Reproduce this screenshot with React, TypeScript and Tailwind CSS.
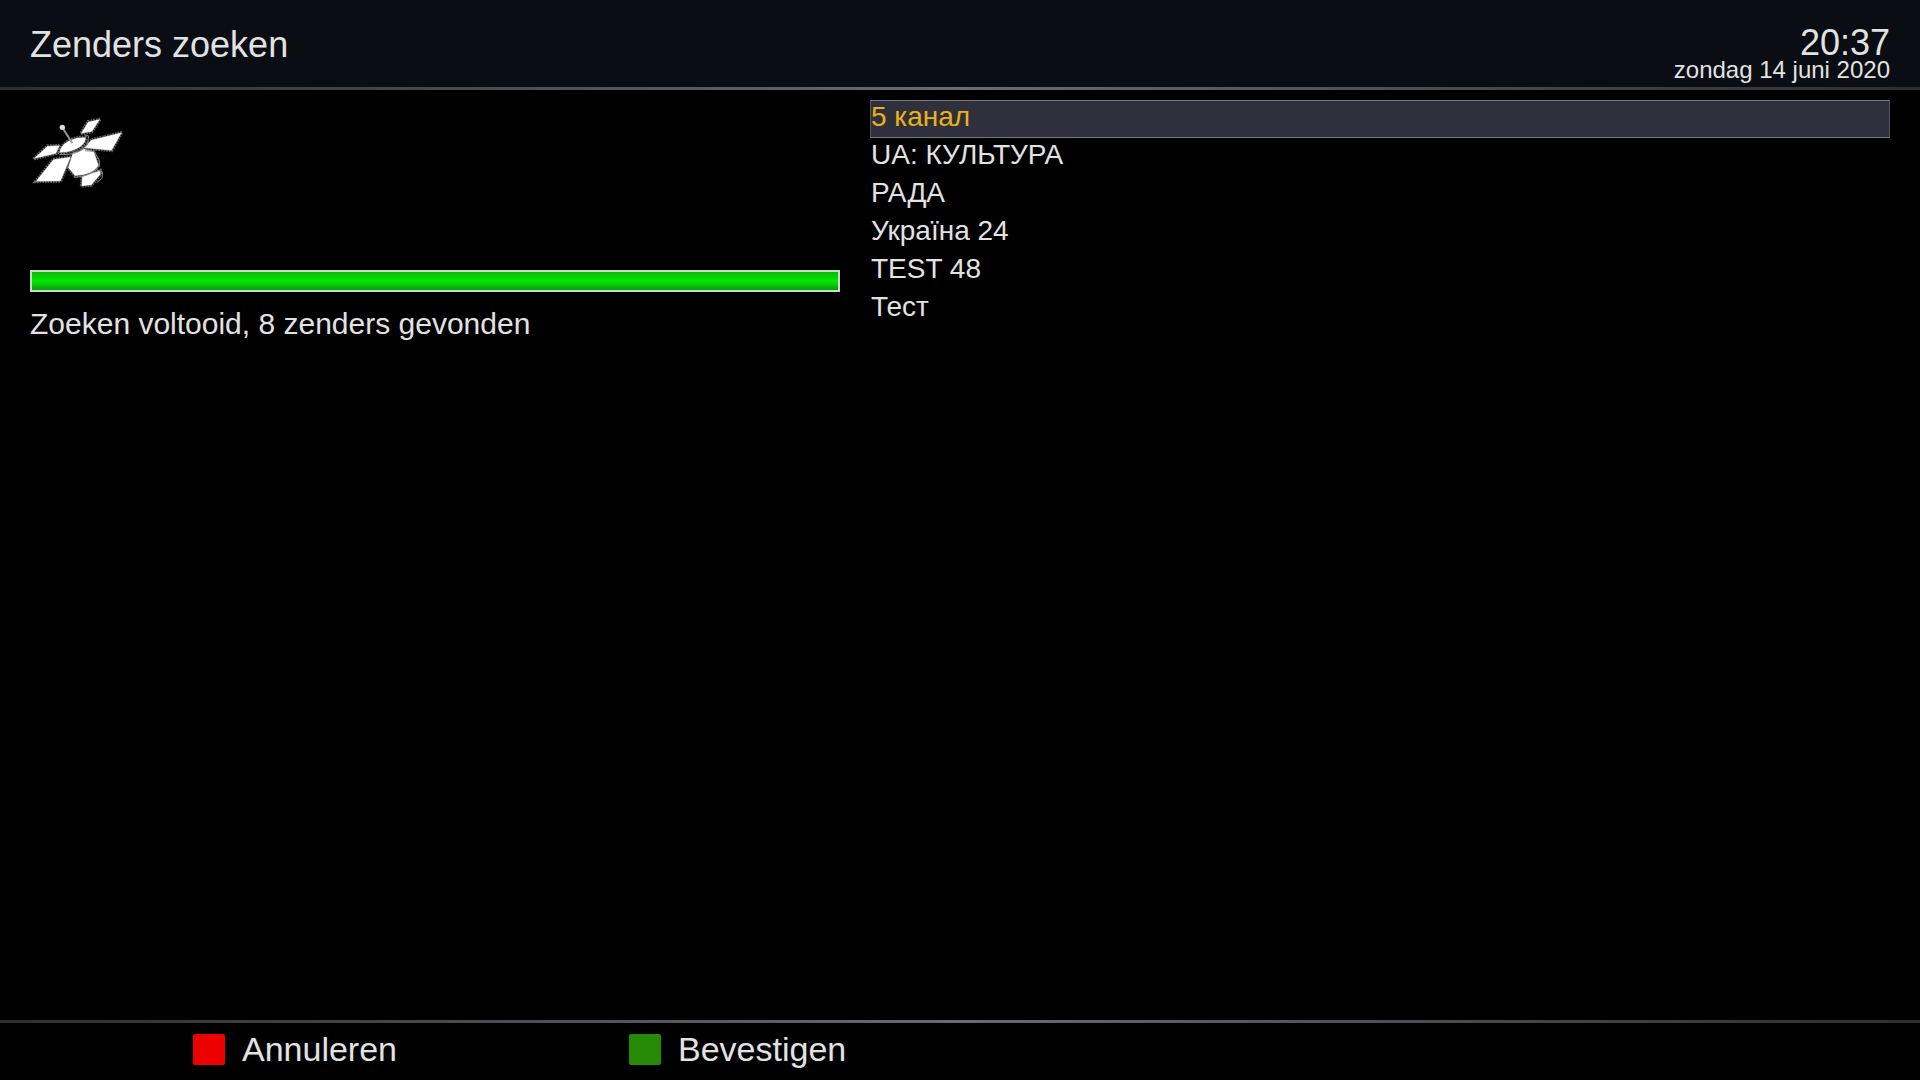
const channels = [
  "5 канал",
  "UA: КУЛЬТУРА",
  "РАДА",
  "Україна 24",
  "TEST 48",
  "Тест",
];

const actions = [
  { label: "Annuleren", color: "bg-[#ee0000]" },
  { label: "Bevestigen", color: "bg-[#268a05]" },
];

const satelliteParts = [
  "M204 50L241 42L216 80L182 86Z",
  "M215 104L306 82L275 137L190 129Z",
  "M82 123L120 121L108 146L40 162Z",
  "M100 163L153 155L122 229L46 230Z",
  "M118 143Q119 124 144 108Q170 94 197 97Q201 110 182 125Q154 144 118 143Z",
  "M158 144Q178 139 190 131L222 139L236 181Q219 211 165 213L144 188Z",
  "M186 214L222 202L241 196L242 208L214 241L184 244Z",
];

const Divider = () => (
  <div className="h-[3px] shrink-0 bg-linear-to-r from-[#2e2e31] via-[#6c6a72] to-[#2e2e31]" />
);

const Satellite = () => (
  <svg className="h-[95px] w-[120px]" viewBox="0 0 360 285" aria-hidden="true">
    {satelliteParts.map((d) => (
      <path
        key={d}
        d={d}
        fill="none"
        stroke="#666"
        strokeWidth="9"
        strokeDasharray="5 3"
      />
    ))}
    {satelliteParts.map((d) => (
      <path key={d} d={d} fill="#fff" stroke="#222" strokeWidth="1" />
    ))}
    <path
      d="M118 149Q180 151 202 120L206 93L192 89M195 137L222 139L239 167L238 183Q212 216 162 217M226 193L248 201L246 220L230 233"
      fill="none"
      stroke="#888"
      strokeWidth="3"
    />
    <path d="M130 72L157 115" stroke="#999" strokeWidth="6" />
    <circle cx="127" cy="67" r="8" fill="#ddd" />
  </svg>
);

const App = () => {
  return (
    <div className="flex min-h-screen flex-col bg-black font-['Liberation_Sans',Arial,sans-serif] text-[#e2e2e2]">
      <header className="flex h-[87px] items-center justify-between bg-[#0a0d14] px-[30px]">
        <h1 className="pt-[2px] text-4xl">Zenders zoeken</h1>
        <div className="flex flex-col self-end pb-[5px] text-right">
          <time className="text-4xl leading-[30px]">20:37</time>
          <span className="text-2xl leading-6">zondag 14 juni 2020</span>
        </div>
      </header>
      <Divider />

      <main className="grid flex-1 grid-cols-[27fr_34fr] items-start gap-[30px] px-[30px] pt-[10px]">
        <section>
          <div className="-ml-[10px] pt-[5px]">
            <Satellite />
          </div>
          <div
            role="progressbar"
            aria-valuenow={100}
            aria-label="Zenders zoeken"
            className="mt-[70px] h-[22px] border-2 border-[#c4dcc0] bg-linear-to-b from-[#0db80d] via-[#00ea00] to-[#0c9c0c]"
          />
          <p className="mt-4 text-[30px] leading-8">
            Zoeken voltooid, 8 zenders gevonden
          </p>
        </section>

        <ul>
          {channels.map((channel, index) => (
            <li key={channel}>
              <button
                type="button"
                className={`block w-full border pb-1 text-left text-[28px] leading-8 ${
                  index === 0
                    ? "border-x-[#555560] border-y-[#777780] bg-[#30303c] text-[#e8b21a]"
                    : "border-transparent"
                }`}
              >
                {channel}
              </button>
            </li>
          ))}
        </ul>
      </main>

      <Divider />
      <footer className="flex h-[57px] items-start pt-[6px] pl-[193px]">
        {actions.map((action) => (
          <button
            key={action.label}
            type="button"
            className="flex w-[436px] items-center gap-[17px] text-[34px] leading-10"
          >
            <span className={`h-[31px] w-8 rounded-xs ${action.color}`} />
            {action.label}
          </button>
        ))}
      </footer>
    </div>
  );
};

export default App;
